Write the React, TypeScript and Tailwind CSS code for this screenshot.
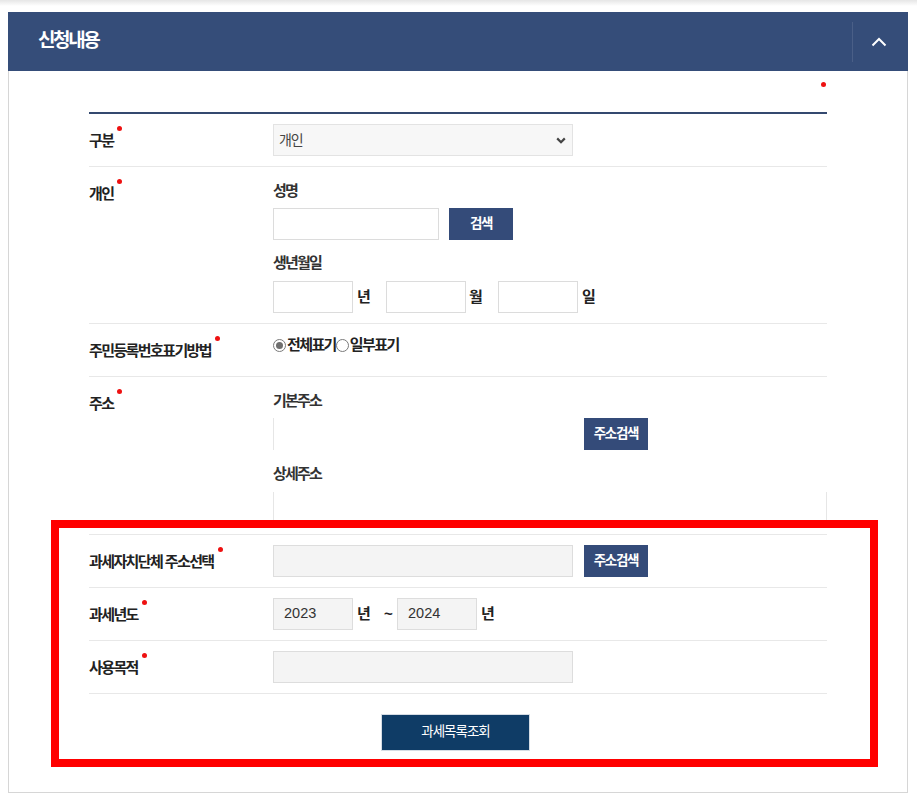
import React from 'react';

const labelCls = "relative top-[1px] inline-block text-[15px] font-bold tracking-[-1.6px] leading-[32px] text-[#222]";
const subCls = "h-[28px] leading-[28px] text-[15px] font-bold tracking-[-1.8px] text-[#333]";
const inputCls = "h-[32px] border border-[#dcdcdc] bg-white";
const roCls = "h-[32px] border border-[#dddddd] bg-[#f4f4f4]";
const btnCls = "h-[32px] w-[64px] bg-[#344b79] text-white text-[13.5px] font-bold tracking-[-1.3px] flex items-center justify-center";
const unitCls = "text-[15px] font-bold text-[#222] leading-[32px]";

const Req = () => (
    <span className="absolute -right-[9px] top-[1px] w-[5px] h-[5px] rounded-full bg-[#ee1111]" />
);

const Row = ({ label, children }: { label: string; children: React.ReactNode }) => (
    <div className="grid grid-cols-[184px_1fr] border-b border-[#e8e8e8] py-[10px]">
        <div className="h-[32px]">
            <span className={labelCls}>
                {label}
                <Req />
            </span>
        </div>
        <div>{children}</div>
    </div>
);

const Radio = ({ checked }: { checked?: boolean }) => (
    <span className="inline-flex w-[13px] h-[13px] rounded-full border border-[#7a7a7a] items-center justify-center bg-white">
        {checked && <span className="w-[7px] h-[7px] rounded-full bg-[#6f6f6f]" />}
    </span>
);

export default function App() {
    return (
        <div className="relative w-[917px] h-[806px] bg-white font-['Liberation_Sans','Noto_Sans_CJK_KR',sans-serif]">
            <div className="h-[12px] bg-gradient-to-b from-[#e6e6e6] via-white to-white" />
            <div className="ml-[8px] w-[900px]">
                {/* 헤더 */}
                <div className="h-[59px] bg-[#354d79] flex items-center pl-[30px]">
                    <h2 className="text-white text-[19px] font-bold tracking-[-2.4px]">신청내용</h2>
                    <div className="ml-auto h-[40px] w-px bg-[#4a5f87]" />
                    <button className="w-[55px] h-full flex items-center justify-center pr-[4px]">
                        <svg width="16" height="10" viewBox="0 0 16 10" fill="none">
                            <path d="M1.5 8.5L8 2l6.5 6.5" stroke="white" strokeWidth="2" />
                        </svg>
                    </button>
                </div>

                {/* 본문 */}
                <div className="border border-t-0 border-[#d6d6d6] px-[80px] pb-[41px]">
                    <div className="h-[41px] flex justify-end pt-[11px]">
                        <span className="w-[5px] h-[5px] rounded-full bg-[#ee1111] mr-[1px]" />
                    </div>
                    <div className="border-t-2 border-[#34496f]">
                        <Row label="구분">
                            <div className="w-[300px] h-[32px] border border-[#e3e3e3] bg-[#f7f7f7] flex items-center pl-[5px] pr-[6px]">
                                <span className="text-[14px] tracking-[-1.2px] text-[#444]">개인</span>
                                <svg className="ml-auto" width="10" height="7" viewBox="0 0 10 7" fill="none">
                                    <path d="M1.2 1.4L5 5.2l3.8-3.8" stroke="#444" strokeWidth="2.2" />
                                </svg>
                            </div>
                        </Row>

                        <Row label="개인">
                            <div className={subCls + " mb-[3px]"}>성명</div>
                            <div className="flex">
                                <div className={inputCls + " w-[166px]"} />
                                <button className={btnCls + " ml-[10px]"}>검색</button>
                            </div>
                            <div className={subCls + " mt-[9px] mb-[4px]"}>생년월일</div>
                            <div className="flex">
                                <div className="flex w-[113px]">
                                    <div className={inputCls + " w-[80px]"} />
                                    <span className={unitCls + " ml-[4px]"}>년</span>
                                </div>
                                <div className="flex w-[112px]">
                                    <div className={inputCls + " w-[80px]"} />
                                    <span className={unitCls + " ml-[3px]"}>월</span>
                                </div>
                                <div className="flex">
                                    <div className={inputCls + " w-[80px]"} />
                                    <span className={unitCls + " ml-[4px]"}>일</span>
                                </div>
                            </div>
                        </Row>

                        <Row label="주민등록번호표기방법">
                            <div className="flex items-center h-[22px] text-[15px] font-bold tracking-[-1.6px] text-[#222]">
                                <Radio checked />
                                <span className="ml-[1px]">전체표기</span>
                                <Radio />
                                <span className="ml-[1px]">일부표기</span>
                            </div>
                            <div className="h-[10px]" />
                        </Row>

                        <Row label="주소">
                            <div className={subCls + " mb-[3px]"}>기본주소</div>
                            <div className="flex">
                                <div className="h-[32px] w-[300px] border-l border-[#e6e6e6]" />
                                <button className={btnCls + " ml-[11px]"}>주소검색</button>
                            </div>
                            <div className={subCls + " mt-[10px] mb-[4px]"}>상세주소</div>
                            <div className="h-[32px] border-x border-[#e6e6e6]" />
                        </Row>

                        <Row label="과세자치단체 주소선택">
                            <div className="flex">
                                <div className={roCls + " w-[300px]"} />
                                <button className={btnCls + " ml-[11px]"}>주소검색</button>
                            </div>
                        </Row>

                        <Row label="과세년도">
                            <div className="flex">
                                <div className={roCls + " w-[80px] flex items-center pl-[10px] text-[14.5px] text-[#333]"}>2023</div>
                                <span className={unitCls + " w-[31px] pl-[4px]"}>년</span>
                                <span className={unitCls + " w-[13px]"}>~</span>
                                <div className={roCls + " w-[80px] flex items-center pl-[10px] text-[14.5px] text-[#333]"}>2024</div>
                                <span className={unitCls + " pl-[4px]"}>년</span>
                            </div>
                        </Row>

                        <Row label="사용목적">
                            <div className={roCls + " w-[300px]"} />
                        </Row>
                    </div>

                    <div className="flex justify-center pt-[20px]">
                        <button className="mr-[5px] w-[149px] h-[37px] bg-[#0f3c66] border border-[#d5dce4] text-white text-[13.5px] tracking-[-1px]">
                            과세목록조회
                        </button>
                    </div>
                </div>
            </div>

            {/* 강조 표시 */}
            <div className="absolute left-[51px] top-[520px] w-[827px] h-[247px] border-[8px] border-[#ff0000] pointer-events-none" />
        </div>
    );
}
